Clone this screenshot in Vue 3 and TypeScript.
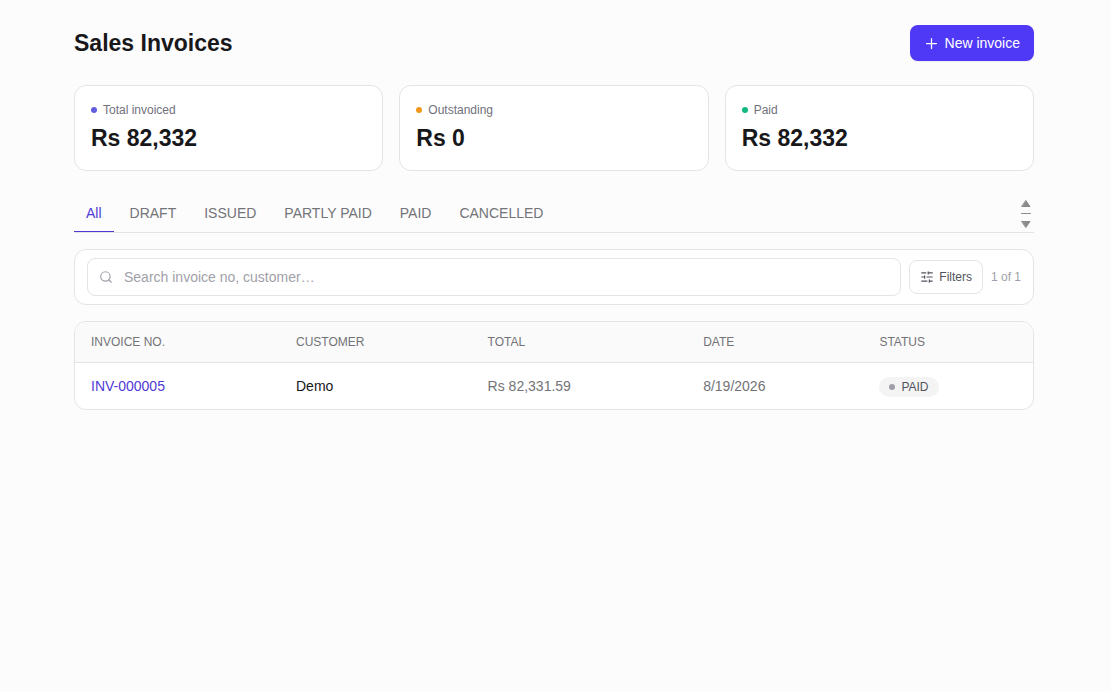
<script setup lang="ts">
import { computed, ref } from 'vue'

interface Invoice {
  no: string
  customer: string
  total: string
  date: string
  status: string
}

const summary = [
  { label: 'Total invoiced', value: 'Rs 82,332', tone: 'indigo' },
  { label: 'Outstanding', value: 'Rs 0', tone: 'amber' },
  { label: 'Paid', value: 'Rs 82,332', tone: 'green' },
]
const tabs = ['All', 'DRAFT', 'ISSUED', 'PARTLY PAID', 'PAID', 'CANCELLED']
const columns = ['INVOICE NO.', 'CUSTOMER', 'TOTAL', 'DATE', 'STATUS']
const invoices: Invoice[] = [
  { no: 'INV-000005', customer: 'Demo', total: 'Rs 82,331.59', date: '8/19/2026', status: 'PAID' },
]

const activeTab = ref('All')
const query = ref('')

const visible = computed(() =>
  invoices.filter((i) => {
    const inTab = activeTab.value === 'All' || i.status === activeTab.value
    const text = `${i.no} ${i.customer}`.toLowerCase()
    return inTab && text.includes(query.value.trim().toLowerCase())
  }),
)
</script>

<template>
  <main class="page">
    <header class="head">
      <h1>Sales Invoices</h1>
      <button type="button" class="primary">
        <svg width="15" height="15" viewBox="0 0 24 24" aria-hidden="true">
          <path d="M4 12h16M12 4v16" />
        </svg>
        New invoice
      </button>
    </header>

    <section class="summary" aria-label="Summary">
      <article v-for="s in summary" :key="s.label" class="stat">
        <p class="label"><span class="dot" :class="s.tone"></span>{{ s.label }}</p>
        <p class="value">{{ s.value }}</p>
      </article>
    </section>

    <nav class="tabs" aria-label="Invoice status">
      <button
        v-for="t in tabs"
        :key="t"
        type="button"
        class="tab"
        :class="{ active: t === activeTab }"
        :aria-pressed="t === activeTab"
        @click="activeTab = t"
      >
        {{ t }}
      </button>
      <svg class="scroller" width="10" height="30" viewBox="0 0 10 30" aria-hidden="true">
        <path d="M5 1.8 9 7.5H1z" />
        <path d="M0.5 14.5h9" />
        <path d="M5 28.2 9 22.5H1z" />
      </svg>
    </nav>

    <section class="toolbar" aria-label="Search and filters">
      <label class="search">
        <svg width="14" height="14" viewBox="0 0 24 24" aria-hidden="true">
          <circle cx="11" cy="11" r="8" />
          <path d="m21 21-4.3-4.3" />
        </svg>
        <input v-model="query" type="text" aria-label="Search invoices" placeholder="Search invoice no, customer…" />
      </label>
      <button type="button" class="filters">
        <svg width="14" height="14" viewBox="0 0 24 24" aria-hidden="true">
          <path d="M10 5H3M12 19H3M14 3v4M16 17v4M21 12h-9M21 19h-5M21 5h-7M8 10v4M8 12H3" />
        </svg>
        Filters
      </button>
      <span class="count">{{ visible.length }} of {{ invoices.length }}</span>
    </section>

    <div class="table-card">
      <table>
        <colgroup>
          <col class="c-no" />
          <col class="c-customer" />
          <col class="c-total" />
          <col class="c-date" />
          <col class="c-status" />
        </colgroup>
        <thead>
          <tr>
            <th v-for="c in columns" :key="c" scope="col">{{ c }}</th>
          </tr>
        </thead>
        <tbody>
          <tr v-for="i in visible" :key="i.no">
            <td><a href="#">{{ i.no }}</a></td>
            <td class="customer">{{ i.customer }}</td>
            <td>{{ i.total }}</td>
            <td>{{ i.date }}</td>
            <td><span class="badge"><span class="dot grey"></span>{{ i.status }}</span></td>
          </tr>
        </tbody>
      </table>
    </div>
  </main>
</template>

<style>
body {
  background: #fcfcfc;
}
</style>

<style scoped>
.page {
  box-sizing: border-box;
  padding: 25px 77px 32px 74px;
  font-family: 'Liberation Sans', Arial, sans-serif;
  font-size: 14px;
  line-height: 20px;
  color: #18181b;
}
button,
input {
  font-family: inherit;
}
button {
  cursor: pointer;
}
svg {
  flex: none;
  fill: none;
  stroke: currentColor;
  stroke-width: 2;
  stroke-linecap: round;
  stroke-linejoin: round;
}
.head {
  display: flex;
  align-items: center;
  justify-content: space-between;
  margin-bottom: 24px;
}
h1 {
  margin: 0;
  font-size: 23px;
  line-height: 32px;
  font-weight: 600;
}
.primary {
  display: flex;
  align-items: center;
  gap: 6px;
  height: 36px;
  padding: 0 14px;
  border: 0;
  border-radius: 8px;
  background: #4f39f6;
  color: #fff;
  font-size: 14px;
  font-weight: 500;
  box-shadow: 0 1px 2px rgba(0, 0, 0, 0.06);
}
.summary {
  display: grid;
  grid-template-columns: repeat(3, 1fr);
  gap: 16px;
  margin-bottom: 24px;
}
.stat,
.toolbar,
.table-card {
  border: 1px solid #e4e4e7;
  border-radius: 12px;
  background: #fff;
}
.stat {
  padding: 16px;
}
.label,
.value {
  margin: 0;
}
.label {
  display: flex;
  align-items: center;
  gap: 6px;
  font-size: 12px;
  line-height: 16px;
  color: #71717b;
}
.value {
  margin-top: 4px;
  font-size: 23px;
  line-height: 32px;
  font-weight: 600;
}
.dot {
  flex: none;
  width: 6px;
  height: 6px;
  border-radius: 50%;
}
.indigo {
  background: #615fdf;
}
.amber {
  background: #f0991b;
}
.green {
  background: #10b981;
}
.grey {
  background: #9f9fa9;
}
.tabs {
  display: flex;
  align-items: center;
  gap: 4px;
  margin-bottom: 16px;
  border-bottom: 1px solid #e4e4e7;
}
.tab {
  height: 37px;
  padding: 0 12px;
  border: 0;
  border-bottom: 1px solid transparent;
  background: none;
  color: #737378;
  font-size: 14px;
}
.tab.active {
  border-bottom-color: #4f39d6;
  color: #4f39d6;
}
.scroller {
  margin-left: auto;
  margin-right: 3px;
  color: #8b8b8b;
  stroke-width: 1;
}
.scroller path {
  fill: currentColor;
}
.toolbar {
  display: flex;
  align-items: center;
  gap: 8px;
  margin-bottom: 16px;
  padding: 8px 12px;
}
.search {
  display: flex;
  flex: 1;
  align-items: center;
  gap: 11px;
  box-sizing: border-box;
  height: 38px;
  padding: 0 11px;
  border: 1px solid #e4e4e7;
  border-radius: 8px;
  color: #9f9fa9;
}
.search input {
  flex: 1;
  min-width: 0;
  padding: 0;
  border: 0;
  outline: 0;
  background: transparent;
  font-size: 14px;
  line-height: 20px;
  color: #18181b;
}
.search input::placeholder {
  color: #9f9fa9;
  opacity: 1;
}
.filters {
  display: flex;
  align-items: center;
  gap: 5px;
  height: 34px;
  padding: 0 10px;
  border: 1px solid #e4e4e7;
  border-radius: 8px;
  background: #fff;
  color: #52525c;
  font-size: 12px;
  font-weight: 500;
}
.count {
  font-size: 12px;
  line-height: 16px;
  color: #9f9fa9;
}
.table-card {
  overflow: hidden;
}
table {
  width: 100%;
  table-layout: fixed;
  border-collapse: collapse;
}
.c-no {
  width: 21.4%;
}
.c-customer {
  width: 20%;
}
.c-total {
  width: 22.5%;
}
.c-date {
  width: 18.4%;
}
.c-status {
  width: 17.7%;
}
th,
td {
  padding: 0 16px;
  text-align: left;
}
th {
  height: 40px;
  border-bottom: 1px solid #e4e4e7;
  background: #fafafa;
  color: #737378;
  font-size: 12px;
  line-height: 16px;
  font-weight: 500;
}
td {
  height: 46px;
  color: #737378;
}
td a {
  color: #4f39d6;
  text-decoration: none;
}
.customer {
  color: #18181b;
}
.badge {
  display: inline-flex;
  align-items: center;
  gap: 6px;
  height: 20px;
  padding: 0 10px;
  border-radius: 10px;
  background: #f4f4f5;
  color: #52525c;
  font-size: 12px;
  line-height: 16px;
  font-weight: 500;
  vertical-align: middle;
}
</style>
